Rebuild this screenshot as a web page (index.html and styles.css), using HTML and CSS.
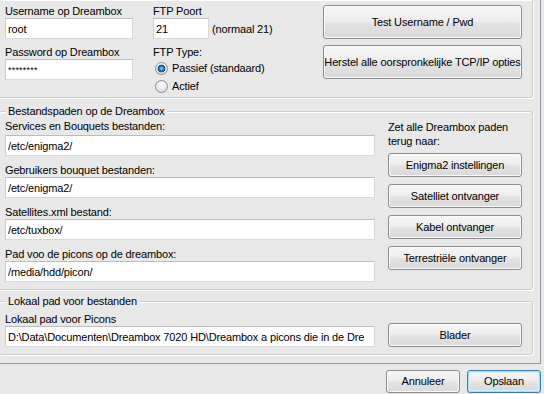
FILE: index.html
```html
<!DOCTYPE html>
<html lang="nl">
<head>
    <meta charset="UTF-8">
    <meta name="viewport" content="width=device-width, initial-scale=1.0">
    <title>Dreambox instellingen</title>
    <link rel="stylesheet" href="styles.css">
</head>
<body>

<div class="page">

    <!-- FTP login -->
    <div class="group group-top">
        <div class="col col-login">
            <label class="lbl" for="username">Username op Dreambox</label>
            <input class="txt" type="text" id="username" value="root">
            <label class="lbl gap" for="password">Password op Dreambox</label>
            <input class="txt pwd" type="text" id="password" value="********">
        </div>

        <div class="col col-ftp">
            <label class="lbl" for="port">FTP Poort</label>
            <div class="port-row">
                <input class="txt port" type="text" id="port" value="21">
                <span class="hint">(normaal 21)</span>
            </div>
            <div class="lbl gap">FTP Type:</div>
            <label class="radio-row"><input class="radio" type="radio" name="ftptype" checked>Passief (standaard)</label>
            <label class="radio-row"><input class="radio" type="radio" name="ftptype">Actief</label>
        </div>

        <div class="col col-tools">
            <button class="btn btn-tall">Test Username / Pwd</button>
            <button class="btn btn-tall">Herstel alle oorspronkelijke TCP/IP opties</button>
        </div>
    </div>

    <!-- Paden op de box -->
    <fieldset class="group group-paths">
        <legend>Bestandspaden op de Dreambox</legend>
        <div class="group-body">
            <div class="paths">
                <div class="field">
                    <label class="lbl first" for="services">Services en Bouquets bestanden:</label>
                    <input class="txt" type="text" id="services" value="/etc/enigma2/">
                </div>
                <div class="field">
                    <label class="lbl" for="bouquets">Gebruikers bouquet bestanden:</label>
                    <input class="txt" type="text" id="bouquets" value="/etc/enigma2/">
                </div>
                <div class="field">
                    <label class="lbl" for="satellites">Satellites.xml bestand:</label>
                    <input class="txt" type="text" id="satellites" value="/etc/tuxbox/">
                </div>
                <div class="field">
                    <label class="lbl" for="picons">Pad voo de picons op de dreambox:</label>
                    <input class="txt" type="text" id="picons" value="/media/hdd/picon/">
                </div>
            </div>

            <div class="presets">
                <p class="presets-text">Zet alle Dreambox paden terug naar:</p>
                <button class="btn">Enigma2 instellingen</button>
                <button class="btn">Satelliet ontvanger</button>
                <button class="btn">Kabel ontvanger</button>
                <button class="btn">Terrestriële ontvanger</button>
            </div>
        </div>
    </fieldset>

    <!-- Lokaal -->
    <fieldset class="group group-local">
        <legend>Lokaal pad voor bestanden</legend>
        <div class="group-body local-body">
            <div class="paths">
                <label class="lbl" for="localpath">Lokaal pad voor Picons</label>
                <input class="txt" type="text" id="localpath" value="D:\Data\Documenten\Dreambox 7020 HD\Dreambox a picons die in de Dre">
            </div>
            <button class="btn browse">Blader</button>
        </div>
    </fieldset>

</div>

<div class="actions">
    <button class="btn btn-footer">Annuleer</button>
    <button class="btn btn-footer btn-default">Opslaan</button>
</div>

</body>
</html>
```

FILE: styles.css
```css
* {
    box-sizing: border-box;
}

body {
    margin: 0;
    width: 544px;
    height: 394px;
    overflow: hidden;
    background-color: #e8e8e8;
    color: #000;
    font-family: "Liberation Sans", Arial, sans-serif;
    font-size: 11px;
    line-height: 13px;
    letter-spacing: -0.15px;
}

/* tab page */
.page {
    width: 545px;
    margin-left: -4px;
    padding: 0 7px 8px 2px;
    border-right: 1px solid #8e99a3;
    border-bottom: 1px solid #8e99a3;
}

.group {
    margin: 0;
    min-width: 0;
    padding: 0 10px 0 6px;
    border: 1px solid #cdcdcd;
    border-radius: 3px;
    box-shadow: 1px 1px 0 #fff, inset 1px 1px 0 #fff;
}

.group legend {
    padding: 0 2px;
    margin-left: 1px;
    background-color: #e8e8e8;
}

.group-top {
    display: flex;
    height: 98px;
    padding-top: 5px;
    border-top: none;
    border-radius: 0 0 3px 3px;
}

.group-paths {
    margin-top: 7px;
    padding-top: 2px;
    padding-bottom: 7px;
}

.group-local {
    margin-top: 5px;
    padding-top: 5px;
    padding-bottom: 7px;
}

.group-body {
    display: flex;
}

.local-body {
    align-items: flex-end;
}

.lbl {
    display: block;
}

.lbl.gap {
    margin-top: 7px;
}

.lbl.first {
    margin-bottom: 2px;
}

.txt {
    display: block;
    width: 100%;
    height: 21px;
    margin: 0;
    padding: 0 2px;
    border: 1px solid #dadada;
    border-top-color: #bdbdbd;
    border-left-color: #cfcfcf;
    background-color: #fff;
    color: #000;
    font: inherit;
    letter-spacing: inherit;
    outline: none;
}

.txt.pwd {
    font-size: 9px;
    letter-spacing: 0.2px;
}

/* top section */
.col-login {
    width: 128px;
}

.col-ftp {
    margin-left: 20px;
}

.col-tools {
    display: flex;
    flex-direction: column;
    gap: 6px;
    width: 199px;
    margin-left: auto;
}

.port-row {
    display: flex;
    align-items: center;
}

.txt.port {
    width: 56px;
}

.hint {
    margin-left: 3px;
    padding-top: 2px;
}

.radio-row {
    display: flex;
    align-items: center;
    height: 18px;
}

.radio-row:first-of-type {
    margin-top: 1px;
}

.radio {
    appearance: none;
    width: 13px;
    height: 13px;
    margin: 0 4px 0 2px;
    border: 1px solid #8f9092;
    border-radius: 50%;
    background: radial-gradient(circle at 50% 35%, #fdfdfd 0, #e4e4e4 60%, #cdcdcd 100%);
}

.radio:checked {
    background:
        radial-gradient(circle at 50% 50%, #9fdcff 0, #3a93dc 1.5px, #1d5ea8 3px, #174a84 3.6px, transparent 4.2px),
        radial-gradient(circle at 50% 35%, #fdfdfd 0, #e4e4e4 60%, #cdcdcd 100%);
}

/* buttons */
.btn {
    display: block;
    height: 24px;
    margin: 0;
    padding: 0;
    border: 1px solid #8b8b8b;
    border-radius: 3px;
    background: linear-gradient(#f6f6f6 0%, #eeeeee 45%, #e2e2e2 55%, #d9d9d9 100%);
    box-shadow: inset 0 0 0 1px #fbfbfb;
    color: #000;
    font: inherit;
    letter-spacing: inherit;
    white-space: nowrap;
    cursor: pointer;
}

.btn-tall {
    height: 34px;
}

/* paths */
.paths {
    width: 370px;
}

.field + .field {
    margin-top: 8px;
}

.presets {
    display: flex;
    flex-direction: column;
    gap: 7px;
    width: 134px;
    margin-left: auto;
}

.presets-text {
    margin: 0 0 -2px;
    line-height: 14px;
}

.browse {
    width: 134px;
    margin-left: auto;
}

/* footer */
.actions {
    display: flex;
    justify-content: flex-end;
    gap: 7px;
    margin-top: 6px;
    padding-right: 3px;
}

.btn-footer {
    width: 74px;
    height: 23px;
}

.btn-default {
    border-color: #3c7fb1;
    box-shadow: inset 0 0 0 1px #a7ddf8, inset 0 0 0 2px #d4effc;
}
```
